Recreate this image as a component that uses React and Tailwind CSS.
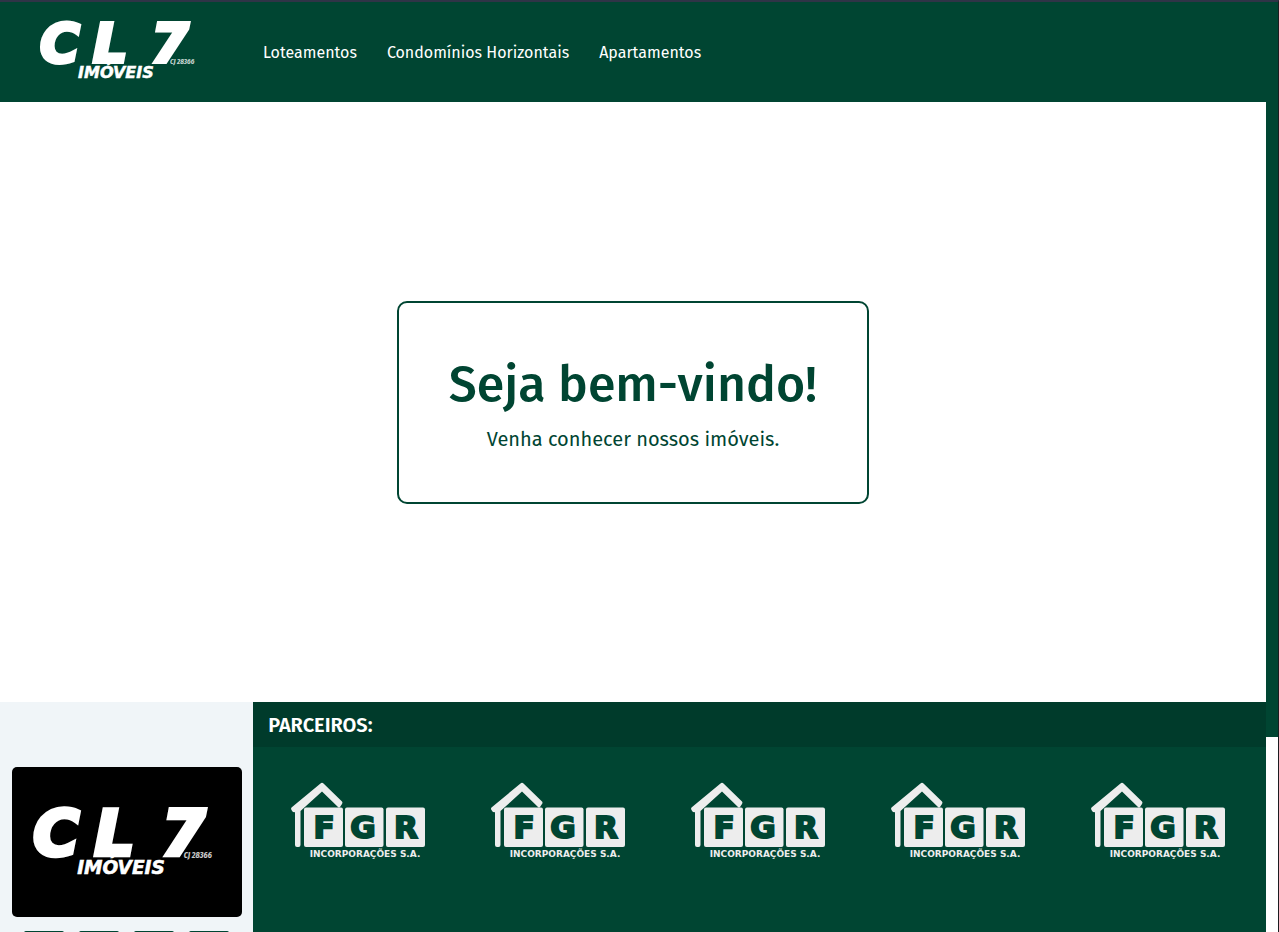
const navLinks = ['Loteamentos', 'Condomínios Horizontais', 'Apartamentos'];
const partners = [1, 2, 3, 4, 5];
const socials = ['Facebook', 'Instagram', 'WhatsApp', 'E-mail'];

function BrandLogo({ className }) {
  return (
    <svg
      viewBox="0 0 168 57"
      className={className}
      role="img"
      aria-label="CL7 Imóveis"
      fill="#fff"
      fontFamily="'DejaVu Sans', sans-serif"
      fontWeight="700"
      fontStyle="italic"
    >
      <g fontSize="54" stroke="#fff" strokeWidth="4" strokeLinejoin="miter">
        <text x="3" y="40">C</text>
        <text x="56" y="40">L</text>
        <text x="114" y="40">7</text>
      </g>
      <text x="41" y="56" fontSize="16" stroke="#fff" strokeWidth="0.5">IMÓVEIS</text>
      <text x="133" y="42" fontSize="7" fontWeight="700" fontFamily="'Fira Sans Condensed', 'Fira Sans', sans-serif" opacity="0.8">
        CJ 28366
      </text>
    </svg>
  );
}

function PartnerLogo() {
  return (
    <svg viewBox="1 0 136 78" className="h-[78px] w-[136px] overflow-visible" role="img" aria-label="FGR Incorporações S.A.">
      <g fill="#ededed">
        <path d="M0.5 25.5 L29.5 1.5 Q31 0 32.5 1.5 L51 19.5 Q52 20.5 51 22 L49 25 Q48 26 47 25 L31 9.500 L9.500 29 V63 Q9.500 65 7.500 65 H6 Q4 65 4 63 V30 Q2 31 0.500 28 Q-0.500 26.500 0.500 25.500 Z" />
        <rect x="13" y="25.500" width="39" height="39.500" rx="2" />
        <rect x="54" y="25.500" width="38.500" height="39.500" rx="2" />
        <rect x="95" y="25.500" width="39" height="39.500" rx="2" />
      </g>
      <g
        fill="#004532"
        stroke="#004532"
        strokeWidth="2"
        fontFamily="'DejaVu Sans', sans-serif"
        fontWeight="700"
        fontSize="31"
        textAnchor="middle"
      >
        <text x="33" y="56">F</text>
        <text x="72" y="56">G</text>
        <text x="115" y="56">R</text>
      </g>
      <text
        x="74"
        y="75"
        textAnchor="middle"
        fill="#ededed"
        fontFamily="'DejaVu Sans', sans-serif"
        fontWeight="700"
        fontSize="9"
      >
        INCORPORAÇÕES S.A.
      </text>
    </svg>
  );
}

export default function App() {
  return (
    <div className="flex h-screen flex-col overflow-hidden border-t-2 border-r border-t-[#2f3447] border-r-[#1c1c20] bg-white font-['Fira_Sans','Noto_Sans',sans-serif]">
      <div className="flex min-h-0 flex-1">
        <div className="flex min-w-0 flex-1 flex-col overflow-hidden">
          <header className="flex h-[100px] shrink-0 items-center bg-[#004532] pl-[37px]">
            <a href="#inicio" className="mb-1">
              <BrandLogo className="h-[57px] w-[168px] overflow-visible" />
            </a>
            <nav className="ml-[58px] flex gap-[30px] pt-0.5 text-base text-white">
              {navLinks.map((label) => (
                <a key={label} href="#imoveis">{label}</a>
              ))}
            </nav>
          </header>

          <main className="flex h-[600px] shrink-0 items-center justify-center bg-white">
            <section className="flex h-[203px] w-[472px] flex-col items-center justify-center rounded-[10px] border-2 border-[#004532] pt-1 text-[#004532]">
              <h1 className="text-[50px] leading-[62px] font-medium">Seja bem-vindo!</h1>
              <p className="mt-2 text-[20px] leading-8">Venha conhecer nossos imóveis.</p>
            </section>
          </main>

          <footer className="flex shrink-0">
            <aside className="flex w-1/5 flex-col items-center bg-[#f0f5f8] pt-[65px] pb-8">
              <div className="flex h-[150px] w-[230px] items-center justify-center rounded-[5px] bg-black">
                <BrandLogo className="h-[66px] w-[196px] overflow-visible" />
              </div>
              <div className="mt-[14px] flex gap-[15px]">
                {socials.map((name) => (
                  <button key={name} type="button" aria-label={name} className="size-10 rounded-xs bg-[#004532]" />
                ))}
              </div>
            </aside>
            <section className="flex-1 bg-[#004532]">
              <h2 className="bg-[#003b2b] px-[15px] pt-0.5 text-[20px] leading-[43px] font-semibold text-white">PARCEIROS:</h2>
              <div className="flex justify-center pt-[35px]">
                {partners.map((id) => (
                  <div key={id} className="flex w-[200px] justify-center">
                    <PartnerLogo />
                  </div>
                ))}
              </div>
            </section>
          </footer>
        </div>
        <div className="w-3 shrink-0 bg-white">
          <div className="h-[79%] bg-[#004532]" />
        </div>
      </div>
    </div>
  );
}
